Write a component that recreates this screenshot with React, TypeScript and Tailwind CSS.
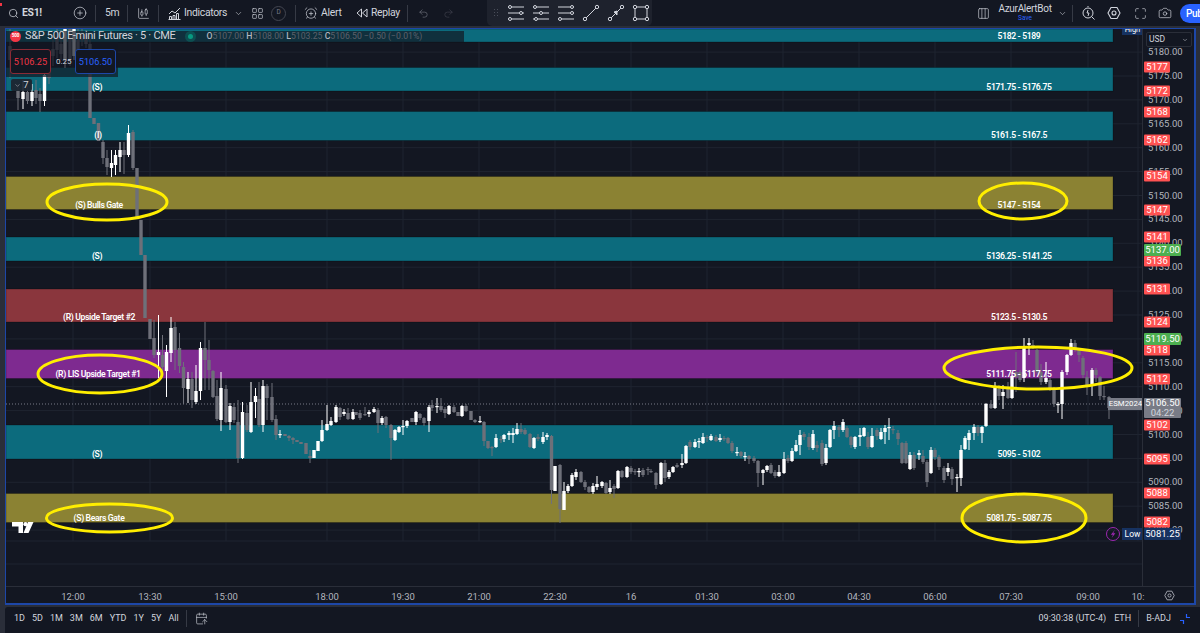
import React from 'react';
import { Search, CirclePlus, CandlestickChart, ChevronDown, LayoutGrid, AlarmClockPlus, Undo2, Redo2, Columns3, Maximize, Camera, CalendarArrowUp } from 'lucide-react';

// [x, bodyTop, bodyBottom, up, wickTop, wickBottom] in page pixels
type Candle = [number, number, number, number, number?, number?];
const candles: Candle[] = [
  [10, 46, 60, 0, 29, 78], [14, 58, 66, 1, 50, 72], [18, 91, 98, 0, 84, 110], [23, 92, 99, 1, 80, 109], [27.5, 92, 101, 0, 86, 104], [32, 92, 101, 1, 84, 106],
  [36, 90, 98, 0, 80, 104], [40, 94, 101, 0, 88, 112], [44.5, 75, 101, 1, 70, 106], [49, 60, 78, 0, 52, 84], [53, 49, 56, 0, 40, 66], [57, 36, 50, 0, 29, 58],
  [61, 44, 54, 0, 30, 60], [65, 29, 60, 1, 29, 68], [70, 29, 60, 0, 29, 66], [74, 29, 56, 1, 29, 60], [78, 40, 52, 0, 29, 60], [82, 34, 40, 0, 29, 46],
  [86, 34, 44, 0, 30, 48], [90, 44, 118, 0, 32, 118], [94, 118, 124, 0], [98.5, 123, 141, 0], [103, 142, 158, 0, 140, 164], [107, 158, 167, 0, 150, 175],
  [111.5, 163, 168, 1, 150, 177], [115.5, 155, 165, 1, 150, 175], [120, 150, 157, 1, 142, 172], [124, 150, 155, 0, 142, 174], [128.5, 133, 155, 1, 125, 157], [133, 132, 168, 0, 130, 170],
  [137, 168, 218, 0], [141, 220, 255, 0], [145, 255, 318, 0], [150, 319, 339, 0], [154, 338, 355, 0, 320, 358], [158.5, 352, 355, 1, 315, 378],
  [162.5, 355, 367, 0, 335, 372], [166.5, 352, 371, 1, 345, 397], [171, 328, 353, 1, 317, 362], [175, 327, 350, 0, 322, 370], [179.5, 348, 366, 0, 333, 373], [183.5, 367, 388, 0, 362, 404],
  [188, 379, 389, 1, 372, 403], [192, 379, 400, 0, 372, 408], [196, 391, 402, 1, 365, 404], [200.5, 348, 391, 1, 342, 400], [205, 348, 360, 0, 322, 390], [209, 360, 370, 0, 340, 390],
  [213, 371, 397, 0, 370, 398], [217, 396, 419, 0, 380, 421], [221, 388, 420, 1, 372, 431], [226, 389, 422, 0, 385, 423], [230, 406, 422, 1, 403, 430], [234, 407, 420, 0, 403, 423],
  [238, 422, 458, 0, 400, 463], [242.5, 412, 458, 1, 402, 459], [247, 413, 430, 0, 405, 432], [251, 402, 432, 1, 382, 433], [255.5, 396, 402, 1, 388, 418], [259, 399, 425, 0, 382, 427],
  [263, 386, 425, 1, 380, 432], [267, 386, 398, 0, 384, 420], [272, 397, 420, 0, 383, 422], [276, 419, 435, 0, 415, 440], [280, 434, 435, 1, 430, 438], [285, 434, 436, 0],
  [289, 436, 438, 0, 435, 441], [293, 438, 440, 0, 437, 444], [297, 440, 442, 0], [301, 442, 444, 0], [306, 443, 454, 0], [310, 456, 458, 0, 450, 463],
  [314, 450, 458, 1], [318, 441, 451, 1], [322, 430, 441, 1, 420, 442], [327, 424, 430, 1, 405, 431], [331, 421, 425, 1, 417, 426], [336, 407, 422, 1, 405, 423],
  [340, 408, 417, 0, 407, 420], [344, 412, 414, 1, 409, 416], [348, 413, 419, 0, 408, 420], [353, 412, 419, 1, 409, 420], [356, 412, 415, 0], [360, 413, 418, 0, 410, 420],
  [365, 414, 415, 0, 407, 416], [369, 412, 414, 1, 410, 417], [374, 409, 412, 1, 407, 413], [378, 410, 423, 0, 408, 433], [382, 418, 423, 1, 416, 425], [386, 417, 425, 0, 416, 428],
  [391, 425, 438, 0, 424, 460], [395, 430, 440, 1, 429, 441], [399, 427, 432, 1, 426, 433], [403, 426, 427, 1, 420, 435], [407, 421, 426, 1, 420, 428], [412, 418, 422, 0],
  [416, 412, 422, 1, 411, 425], [420, 414, 418, 0, 413, 420], [424, 418, 423, 0, 417, 426], [429, 407, 421, 1, 405, 432], [432, 405, 408, 0, 400, 411], [437, 406, 407, 1, 398, 413],
  [441, 406, 410, 0, 398, 412], [445, 409, 413, 0, 407, 418], [449, 406, 414, 1, 405, 415], [454, 407, 412, 0, 405, 413], [458, 412, 416, 0], [462, 406, 416, 1, 405, 417],
  [466, 406, 411, 0, 404, 412], [471, 411, 420, 0], [475, 420, 422, 0, 419, 423], [480, 421, 422, 1, 416, 423], [484, 422, 441, 0, 421, 446], [488, 441, 448, 0, 441, 449],
  [492, 447, 448, 0, 446, 456], [496, 438, 447, 1, 434, 448], [501, 439, 440, 0, 436, 443], [504, 435, 439, 1, 434, 442], [509, 433, 435, 1, 431, 440], [513, 433, 435, 1, 428, 443],
  [517, 429, 434, 1, 423, 435], [521, 429, 432, 0, 423, 434], [525, 430, 434, 0, 428, 435], [530, 434, 447, 0, 433, 448], [534, 438, 448, 1, 437, 449], [538, 437, 439, 0, 434, 441],
  [543, 437, 442, 1, 432, 444], [547, 435, 437, 1, 433, 440], [551.5, 436, 490, 0, 435, 504], [555, 466, 491, 1], [560, 465, 509, 0, 464, 523], [564, 491, 510, 1, 482, 510],
  [568, 486, 491, 1, 484, 493], [572, 475, 486, 1, 473, 487], [576, 472, 477, 1, 469, 480], [581, 472, 482, 0, 471, 483], [585, 482, 487, 0, 480, 490], [589, 487, 492, 0, 486, 493],
  [593, 486, 492, 1, 483, 494], [597, 484, 487, 1, 476, 490], [602, 482, 486, 1, 481, 488], [606, 483, 493, 0, 482, 494], [610, 488, 492, 1, 480, 494], [614, 486, 489, 0, 484, 498],
  [618, 471, 488, 1, 470, 489], [622, 471, 477, 0, 470, 478], [627, 467, 477, 1, 466, 478], [631, 468, 472, 0, 466, 474], [635, 471, 472, 0, 469, 475], [639, 471, 472, 1, 468, 477],
  [643, 470, 475, 0, 468, 477], [648, 469, 470, 0, 467, 475], [651, 471, 472, 0, 469, 473], [656, 473, 485, 0, 472, 489], [661, 463, 484, 1, 462, 485], [665, 463, 478, 0, 460, 482],
  [669, 472, 477, 1, 470, 479], [673, 467, 472, 1, 466, 473], [677, 465, 467, 0, 463, 468], [682, 463, 465, 1, 454, 468], [686, 446, 463, 1, 445, 464], [690, 442, 447, 0, 440, 450],
  [695, 442, 447, 1, 439, 448], [699, 441, 442, 1, 438, 448], [703, 437, 443, 1, 433, 444], [707, 437, 438, 0, 435, 442], [711, 436, 440, 1, 434, 441], [716, 437, 441, 0, 435, 442],
  [720, 438, 440, 1, 434, 442], [724, 438, 439, 0, 436, 441], [728, 438, 443, 0, 437, 444], [732, 443, 451, 0, 441, 453], [737, 452, 453, 1, 447, 456], [741, 452, 456, 0, 451, 458],
  [745, 456, 457, 1, 452, 461], [749, 456, 459, 0, 455, 464], [754, 458, 461, 0, 456, 463], [758, 461, 473, 0, 460, 487], [763, 470, 473, 1, 469, 485], [767, 466, 470, 1, 465, 472],
  [771, 465, 473, 0, 463, 474], [775, 472, 476, 0, 470, 478], [779, 472, 476, 1, 465, 477], [784, 459, 473, 1, 452, 474], [788, 458, 461, 0, 455, 463], [792, 451, 461, 1, 448, 462],
  [796, 445, 451, 1, 440, 452], [800, 435, 445, 1, 430, 455], [804, 434, 437, 0, 432, 440], [809, 437, 447, 0, 433, 450], [813, 434, 448, 1, 430, 450], [817, 445, 448, 0, 441, 452],
  [822, 443, 464, 0, 440, 466], [826, 448, 463, 1, 444, 465], [830, 430, 447, 1, 429, 448], [834, 426, 430, 1, 421, 439], [839, 427, 430, 0, 425, 437], [843, 422, 430, 1, 419, 432],
  [847, 428, 437, 0, 426, 438], [851, 437, 445, 0, 436, 448], [855, 437, 447, 1, 436, 449], [860, 435, 437, 1, 428, 446], [864, 428, 436, 1, 427, 437], [868, 437, 447, 0, 432, 449],
  [872, 436, 447, 1, 428, 448], [877, 430, 436, 0, 428, 440], [881, 432, 439, 1, 428, 440], [885, 428, 432, 1, 425, 444], [889, 427, 428, 1, 418, 440], [893, 429, 430, 0, 426, 434],
  [898, 433, 439, 0, 430, 445], [902, 443, 463, 0, 442, 464], [906, 443, 463, 0, 441, 464], [910, 455, 469, 1, 452, 470], [914, 455, 468, 0, 452, 470], [919, 453, 455, 1, 450, 460],
  [923, 456, 462, 0, 450, 464], [927, 462, 482, 0, 460, 487], [931, 450, 473, 1, 447, 474], [935, 450, 457, 0, 448, 460], [939, 457, 467, 0, 455, 470], [944, 468, 480, 0, 466, 483],
  [948, 468, 472, 1, 463, 476], [952, 469, 479, 0, 467, 485], [957, 477, 478, 1, 474, 492], [961, 450, 478, 1, 445, 486], [965, 438, 449, 1, 436, 450], [969, 433, 440, 1, 430, 450],
  [974, 427, 433, 1, 424, 440], [978, 427, 433, 0, 425, 436], [982, 427, 433, 1, 426, 443], [986, 404, 426, 1, 403, 427], [991, 404, 408, 0, 400, 409], [995, 388, 408, 1, 382, 409],
  [999, 389, 396, 0, 385, 400], [1003, 392, 396, 1, 385, 409], [1008, 389, 398, 0, 382, 399], [1012, 376, 398, 1, 372, 399], [1016, 372, 377, 0, 352, 392], [1020, 372, 380, 0, 370, 382],
  [1024, 348, 378, 1, 338, 382], [1029, 343, 345, 1, 338, 355], [1033, 345, 347, 0, 340, 349], [1037, 350, 372, 0, 349, 374], [1041, 372, 382, 0, 364, 385], [1046, 378, 382, 1, 362, 384],
  [1050, 380, 388, 0, 378, 391], [1054, 388, 404, 0, 387, 407], [1058, 404, 405, 1, 402, 413], [1062, 372, 404, 1, 370, 419], [1067, 355, 372, 1, 354, 375], [1071, 343, 355, 1, 339, 356],
  [1075, 343, 350, 0, 340, 352], [1079, 350, 355, 0, 348, 362], [1083, 358, 375, 0, 356, 378], [1087, 377, 385, 0, 371, 395], [1092, 370, 385, 1, 368, 396], [1096, 370, 375, 0, 368, 382],
  [1100, 377, 396, 0, 376, 400], [1104, 396, 397, 0, 386, 400], [1109, 397, 408, 0, 396, 419],
];

const bands = [
  { y: 29, h: 13, c: '#0c6b7d' }, { y: 67.5, h: 23.5, c: '#0c6b7d' }, { y: 111.5, h: 29, c: '#0c6b7d' },
  { y: 176.5, h: 33, c: '#8b8233' }, { y: 237, h: 24, c: '#0c6b7d' }, { y: 289, h: 33, c: '#8a363d' },
  { y: 349.5, h: 29, c: '#7e2a90' }, { y: 425, h: 34, c: '#0c6b7d' }, { y: 493.5, h: 29, c: '#8b8233' },
];

const rings = [[107, 202, 60, 18], [100, 374, 62, 19], [109.5, 518, 63, 14], [1023, 201, 44, 18], [1038, 368, 94, 21], [1024, 518, 62, 24]];

const zoneLabels = [
  ['(S)', 97, 87], ['(I)', 98, 135], ['(S) Bulls Gate', 99, 205], ['(S)', 97, 256], ['(R) Upside Target #2', 99, 317],
  ['(R) LIS Upside Target #1', 98, 374], ['(S)', 97, 454], ['(S) Bears Gate', 99, 518],
  ['5182 - 5189', 1019, 36], ['5171.75 - 5176.75', 1019, 87], ['5161.5 - 5167.5', 1019, 135], ['5147 - 5154', 1019, 205],
  ['5136.25 - 5141.25', 1019, 256], ['5123.5 - 5130.5', 1019, 317], ['5111.75 - 5117.75', 1019, 374], ['5095 - 5102', 1019, 454],
  ['5081.75 - 5087.75', 1019, 518],
] as const;

const redTags = [[5177, 67], [5172, 91], [5168, 112], [5162, 140], [5154, 176], [5147, 210], [5141, 237], [5136, 261], [5131, 289], [5124, 322], [5118, 350], [5112, 379], [5102, 425], [5095, 459], [5088, 493], [5082, 522]];
const times = [['12:00', 73], ['13:30', 150], ['15:00', 226], ['18:00', 327], ['19:30', 403], ['21:00', 479], ['22:30', 555], ['16', 631], ['01:30', 707], ['03:00', 783], ['04:30', 859], ['06:00', 935], ['07:30', 1011], ['09:00', 1088], ['10:', 1138]] as const;
const priceY = (p: number) => 195.5 + (5150 - p) * 4.78;
const priceTicks = Array.from({ length: 21 }, (_, i) => 5180 - i * 5);
const ranges = ['1D', '5D', '1M', '3M', '6M', 'YTD', '1Y', '5Y', 'All'];

const Sep = ({ className = '' }: { className?: string }) => <div className={`h-[17px] w-px bg-[#363a45] shrink-0 ${className}`} />;

const ToolIcon = ({ children }: { children: React.ReactNode }) => (
  <svg width="18" height="18" viewBox="0 0 18 18" fill="none" stroke="#d1d4dc" strokeWidth="1" className="shrink-0">
    {children}
  </svg>
);

const ThreeLines = ({ dots }: { dots: number[] }) => (
  <ToolIcon>
    {[3, 9, 15].map((y, i) => (
      <React.Fragment key={y}>
        <path d={`M1 ${y}H17`} />
        <circle cx={dots[i]} cy={y} r="1.5" fill="#1e222d" />
      </React.Fragment>
    ))}
  </ToolIcon>
);

const Gear = ({ size, className = '' }: { size: number; className?: string }) => (
  <svg width={size} height={size} viewBox="0 0 14 14" fill="none" stroke="currentColor" strokeWidth="1.1" className={className}>
    <path d="M4 1.5H10L13 7L10 12.5H4L1 7Z" />
    <circle cx="7" cy="7" r="2" />
  </svg>
);

const App: React.FC = () => {
  return (
    <div className="w-[1200px] h-[633px] overflow-hidden flex flex-col bg-[#2a2e39] font-[Roboto,sans-serif] text-[#d1d4dc]">
      {/* Top toolbar */}
      <header className="relative h-[26px] shrink-0 bg-[#131722] flex items-center text-[10.4px] tracking-[-0.3px] whitespace-nowrap">
        <span className="absolute left-0 top-[3px] w-[2px] h-[3px] bg-[#f23645]" />
        <Search size={11} strokeWidth={1.6} className="ml-[8px] shrink-0" />
        <span className="ml-[3px] w-[18px] font-bold">ES1!</span>
        <CirclePlus size={14} strokeWidth={1.2} className="ml-[33px] shrink-0" />
        <Sep className="ml-[8px]" />
        <span className="ml-[9px] w-[13px]">5m</span>
        <Sep className="ml-[9px]" />
        <CandlestickChart size={13} strokeWidth={1.2} className="ml-[9px] shrink-0" />
        <Sep className="ml-[8px]" />
        <svg width="13" height="13" viewBox="0 0 13 13" fill="none" stroke="#d1d4dc" strokeWidth="1" className="ml-[9px] shrink-0">
          <path d="M1 7 L4 4 L7 6 L12 1" />
          <path d="M1.5 12V9.5H3.5V12M5 12V8.5H7V12M8.5 12V6.5H10.5V12M.5 12.5H12.5" />
        </svg>
        <span className="ml-[3px] w-[40px]">Indicators</span>
        <ChevronDown size={9} strokeWidth={1.5} className="ml-[10px] shrink-0" />
        <LayoutGrid size={13} strokeWidth={1.2} className="ml-[8px] shrink-0" />
        <span className="ml-[7px] w-[15px] h-[15px] shrink-0 rounded-full border border-[#434651] text-[6.5px] text-[#787b86] flex items-center justify-center">D</span>
        <Sep className="ml-[9px]" />
        <AlarmClockPlus size={14} strokeWidth={1.2} className="ml-[8px] shrink-0" />
        <span className="ml-[3px] w-[20px]">Alert</span>
        <svg width="12" height="10" viewBox="0 0 12 10" fill="none" stroke="#d1d4dc" strokeWidth="1" className="ml-[15px] shrink-0">
          <path d="M5.5 1 L1 5 L5.5 9 Z M11 1 L6.5 5 L11 9 Z" />
        </svg>
        <span className="ml-[3px] w-[28px]">Replay</span>
        <Sep className="ml-[8px]" />
        <Undo2 size={11} strokeWidth={1.3} className="ml-[10px] shrink-0 text-[#787b86]" />
        <Redo2 size={11} strokeWidth={1.3} className="ml-[14px] shrink-0 text-[#434651]" />

        {/* floating drawing toolbar */}
        <div className="absolute left-[487px] top-0 w-[165px] h-[26px] rounded-b-[5px] bg-[#1e222d] flex items-center">
          <span className="ml-[6px] w-[5px] h-[10px] bg-[radial-gradient(#4a4e5a_1px,transparent_1px)] bg-[length:3px_3px]" />
          <div className="ml-[9px] flex items-center gap-[7px]">
            <ThreeLines dots={[3, 14, 3]} />
            <ThreeLines dots={[3, 9, 4]} />
            <ThreeLines dots={[15, 15, 3]} />
            <ToolIcon><path d="M3 15 L15 3" /><circle cx="3" cy="15" r="1.7" fill="#1e222d" /><circle cx="15" cy="3" r="1.7" fill="#1e222d" /></ToolIcon>
            <ToolIcon><path d="M3 15 L15 3" /><circle cx="3" cy="15" r="1.7" fill="#1e222d" /><circle cx="15" cy="3" r="1.7" fill="#1e222d" /><path d="M7 8 L10 7 L10 11 Z" fill="#d1d4dc" /></ToolIcon>
            <ToolIcon><rect x="3" y="3" width="12" height="12" /><circle cx="3" cy="3" r="1.7" fill="#1e222d" /><circle cx="15" cy="3" r="1.7" fill="#1e222d" /><circle cx="3" cy="15" r="1.7" fill="#1e222d" /><circle cx="15" cy="15" r="1.7" fill="#1e222d" /></ToolIcon>
          </div>
        </div>

        <div className="ml-auto flex items-center">
          <Columns3 size={13} strokeWidth={1.2} className="shrink-0" />
          <div className="ml-[8px] w-[54px] flex flex-col items-center leading-none">
            <span className="text-[10px]">AzurAlertBot</span>
            <span className="text-[6.5px] mt-[1px] tracking-normal text-[#2962ff]">Save</span>
          </div>
          <ChevronDown size={9} strokeWidth={1.5} className="ml-[6px] shrink-0" />
          <Sep className="ml-[5px]" />
          <svg width="13" height="14" viewBox="0 0 13 14" fill="none" stroke="#d1d4dc" strokeWidth="1" className="ml-[9px] shrink-0">
            <circle cx="6" cy="7" r="5" /><path d="M6 1 V0M6 4 L5 7 L7 7 L6 10M9.5 10.5 L12.5 13.5" />
          </svg>
          <Gear size={14} className="ml-[12px] shrink-0" />
          <Maximize size={13} strokeWidth={1.2} className="ml-[13px] shrink-0" />
          <Camera size={14} strokeWidth={1.2} className="ml-[11px] shrink-0" />
          <div className="ml-[8px] w-[20px] h-[19px] rounded-l-full bg-[#2962ff] text-white text-[10px] font-medium pl-[6px] flex items-center overflow-hidden">Publish</div>
        </div>
      </header>

      <div className="h-[2px] shrink-0" />

      {/* Chart frame */}
      <div className="ml-[5px] mr-[4px] h-[577px] shrink-0 border border-[#1d47a8] border-b-2 border-r-2 bg-[#131722] flex flex-col">
        <div className="flex h-[557px] shrink-0">
          <div className="relative w-[1137px] h-[557px] overflow-hidden text-white">
            <svg className="absolute inset-0" width="1137" height="557" viewBox="6 29 1137 557">
              {priceTicks.concat([5065, 5060]).map(p => <path key={p} d={`M6 ${priceY(p)}H1143`} stroke="#1f2430" />)}
              {[541, 564].map(y => <path key={y} d={`M6 ${y}H1143`} stroke="#1f2430" />)}
              {times.map(([t, x]) => <path key={t} d={`M${x} 29V541`} stroke="#1f2430" />)}
              {bands.map(b => <rect key={b.y} x="6" y={b.y} width="1107" height={b.h} fill={b.c} stroke="#000" strokeOpacity=".25" />)}
              <path d="M6 404H1108" stroke="#787b86" strokeDasharray="1 2" />
              {candles.map(([x, t, b, up, wt, wb]) => {
                const col = up ? '#ffffff' : '#6e7079';
                return (
                  <g key={x}>
                    <path d={`M${x} ${wt ?? t}V${wb ?? b}`} stroke={col} />
                    <rect x={x - 1.7} y={t} width="3.4" height={Math.max(b - t, 1.2)} fill={col} />
                  </g>
                );
              })}
              {rings.map(([cx, cy, rx, ry]) => <ellipse key={cx + cy} cx={cx} cy={cy} rx={rx} ry={ry} fill="none" stroke="#ffee00" strokeWidth="3" />)}
              {/* watermark logo */}
              <path d="M12 522H23V533H18.5V526.5H12ZM28 522H33.5L28.5 533H23.5Z" fill="#fff" />
              <circle cx="25.5" cy="524.2" r="2.1" fill="#fff" />
              <circle cx="1113" cy="534" r="6.5" fill="none" stroke="#9c27b0" />
              <path d="M1114.8 530 L1110.8 534.8 H1113 L1111.6 538 L1115.4 533.2 H1113.2 Z" fill="#9c27b0" />
            </svg>

            {/* legend */}
            <div className="absolute left-0 top-[2px] w-[458px] h-[11px] bg-[#131722]/70 flex items-center whitespace-nowrap">
              <span className="ml-[4px] w-[11px] h-[11px] shrink-0 rounded-full bg-[#f23645] text-[4.5px] font-bold text-white flex items-center justify-center">500</span>
              <span className="ml-[4px] text-[11px] tracking-[-0.3px] text-[#d1d4dc]">S&amp;P 500 E-mini Futures · 5 · CME</span>
              <span className="ml-[9px] w-[11px] h-[11px] shrink-0 rounded-full bg-[#089981]/30 flex items-center justify-center"><span className="w-[5px] h-[5px] rounded-full bg-[#089981]" /></span>
              <span className="ml-[11px] text-[8.7px] text-[#5c606b]"><b className="text-[#b2b5be] font-medium">O</b>5107.00 <b className="text-[#b2b5be] font-medium">H</b>5108.00 <b className="text-[#b2b5be] font-medium">L</b>5103.25 <b className="text-[#b2b5be] font-medium">C</b>5106.50 −0.50 (−0.01%)</span>
            </div>
            <div className="absolute left-0 top-[13px] w-[112px] h-[35px] bg-[#131722]/70" />
            <div className="absolute left-[4px] top-[20px] w-[41px] h-[25px] rounded-[3px] border border-[#8a2a35] bg-[#131722] text-[#f23645] text-[9.2px] flex items-center justify-center">5106.25</div>
            <span className="absolute left-[50px] top-[27px] text-[8px] text-[#d1d4dc]">0.25</span>
            <div className="absolute left-[69px] top-[20px] w-[41px] h-[25px] rounded-[3px] border border-[#1d47a8] bg-[#131722] text-[#2962ff] text-[9.2px] flex items-center justify-center">5106.50</div>
            <div className="absolute left-[5px] top-[50px] w-[21px] h-[12px] rounded-[2px] bg-[#1e222d]/90 flex items-center justify-center gap-[2px] text-[9.5px] text-[#d1d4dc]">
              <ChevronDown size={7} strokeWidth={1.5} />7
            </div>

            {/* zone labels */}
            {zoneLabels.map(([t, x, y]) => (
              <span key={t + y} className="absolute -translate-x-1/2 -translate-y-1/2 text-[8.6px] tracking-[-0.35px] font-semibold whitespace-nowrap text-white" style={{ left: x - 6, top: y - 29 }}>{t}</span>
            ))}

            <div className="absolute left-[1116px] top-0 w-[21px] h-[6px] bg-[#163261] overflow-hidden text-[7.5px] leading-[2px] text-center">High</div>
            <div className="absolute left-[1102px] top-[369px] w-[35px] h-[12px] bg-[#787b86] text-[7.8px] text-white flex items-center justify-center">ESM2024</div>
            <div className="absolute left-[1116px] top-[499px] w-[21px] h-[12px] bg-[#163261] text-[8.5px] text-white flex items-center justify-center">Low</div>
          </div>

          {/* price axis */}
          <div className="relative w-[52px] border-l border-[#2a2e39] text-[9.5px] text-[#b2b5be] overflow-hidden">
            {priceTicks.map(p => (
              <span key={p} className="absolute left-[5px] -translate-y-1/2" style={{ top: priceY(p) - 29 }}>{p}.00</span>
            ))}
            <div className="absolute left-[3px] top-[3px] w-[46px] h-[15px] rounded-[2px] border border-[#2a2e39] bg-[#131722] text-[#d1d4dc] text-[8.5px] pl-[2px] flex items-center justify-between pr-[3px]">
              USD <ChevronDown size={6} strokeWidth={2} />
            </div>
            {redTags.map(([p, y]) => (
              <div key={p} className="absolute left-[1px] w-[26px] h-[11px] rounded-[1px] bg-[#ff5252] text-white text-[9.5px] flex items-center justify-center -translate-y-1/2" style={{ top: y - 29 }}>{p}</div>
            ))}
            <div className="absolute left-[1px] top-[215px] w-[37px] h-[12px] rounded-[1px] bg-[#4caf50] text-white text-[9.5px] flex items-center justify-center">5137.00</div>
            <div className="absolute left-[1px] top-[304px] w-[37px] h-[12px] rounded-[1px] bg-[#4caf50] text-white text-[9.5px] flex items-center justify-center">5119.50</div>
            <div className="absolute left-[1px] top-[369px] w-[37px] h-[20px] rounded-[1px] bg-[#787b86] text-white text-[9.5px] leading-[10px] flex flex-col items-center justify-center"><span>5106.50</span><span className="text-[#d1d4dc]">04:22</span></div>
            <div className="absolute left-[1px] top-[499px] w-[37px] h-[12px] rounded-[1px] bg-[#163261] text-white text-[9.5px] flex items-center justify-center">5081.25</div>
          </div>
        </div>

        {/* time axis */}
        <div className="relative h-[17px] shrink-0 border-t border-[#2a2e39] text-[9.5px] text-[#b2b5be]">
          {times.map(([t, x]) => (
            <span key={t} className="absolute top-[3px] -translate-x-1/2" style={{ left: x - 6 }}>{t}</span>
          ))}
          <Gear size={11} className="absolute left-[1158px] top-[3px]" />
        </div>
      </div>

      {/* Bottom bar */}
      <footer className="mt-[2px] ml-[5px] pb-[3px] flex-1 rounded-tl-[3px] bg-[#131722] flex items-center text-[9px] whitespace-nowrap">
        <div className="ml-[9px] flex items-center gap-[7px]">
          {ranges.map(r => <span key={r}>{r}</span>)}
        </div>
        <Sep className="ml-[7px]" />
        <CalendarArrowUp size={13} strokeWidth={1.2} className="ml-[8px]" />
        <div className="ml-auto flex items-center">
          <span>09:30:38 (UTC-4)</span>
          <span className="ml-[8px]">ETH</span>
          <Sep className="ml-[7px]" />
          <span className="ml-[7px]">B-ADJ</span>
          <svg width="10" height="10" viewBox="0 0 10 10" fill="none" stroke="#2962ff" strokeWidth="1.2" className="ml-[9px] mr-[10px]">
            <path d="M0 6.5H3.5V10M6.5 0V3.5H10" />
          </svg>
        </div>
      </footer>
    </div>
  );
};

export default App;
